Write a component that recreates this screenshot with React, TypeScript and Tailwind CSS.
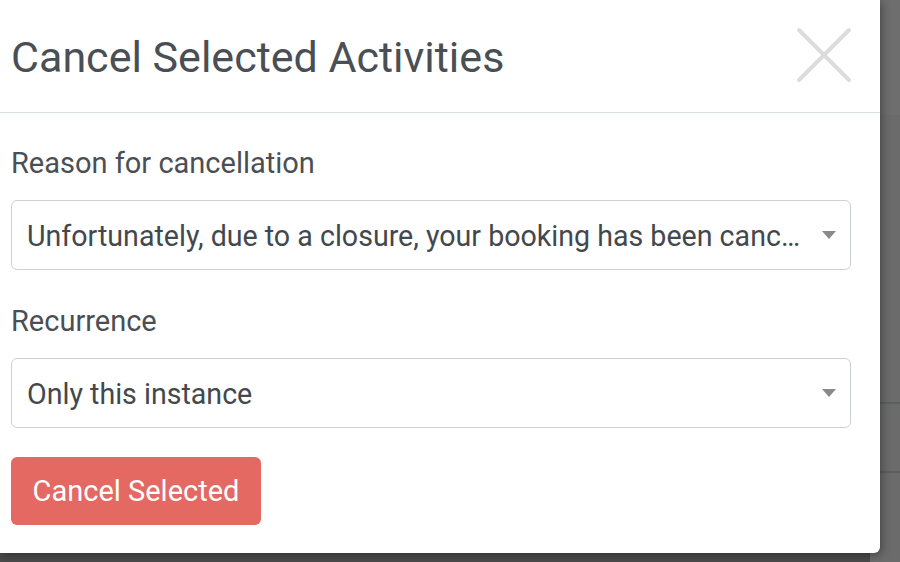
import React from "react";

function Caret() {
  return (
    <svg width="14" height="9" viewBox="0 0 14 9" className="shrink-0">
      <path d="M0 0 H14 L7 8 Z" fill="#8a8a8a" />
    </svg>
  );
}

function SelectBox({ value }: { value: string }) {
  return (
    <div className="flex h-[70px] items-center rounded-[6px] border border-[#c9d2da] bg-white pl-[15px] pr-[14px]">
      <span className="min-w-0 flex-1 truncate pt-[3px] text-[28.6px] leading-[1.3] text-[#43484d]">{value}</span>
      <span className="ml-[12px]">
        <Caret />
      </span>
    </div>
  );
}

export default function App() {
  return (
    <div
      className="relative h-[562px] w-[900px] overflow-hidden bg-[#4a4a4a]"
      style={{ fontFamily: "Roboto, 'Noto Sans', sans-serif" }}
    >
      <div className="absolute inset-y-0 right-0 w-[30px] bg-[#6b6b6b]">
        <div className="h-[115px] bg-[#6e6e6e]" />
        <div className="mt-[287px] h-[2px] bg-[#5c5f5f]" />
        <div className="mt-[67px] h-[2px] bg-[#5c5f5f]" />
      </div>
      <div className="relative flex h-[553px] w-[880px] flex-col rounded-br-[6px] bg-white shadow-[2px_2px_8px_rgba(0,0,0,0.35)]">
        <div className="flex h-[113px] items-center justify-between border-b border-[#d5dde6] pl-[11px] pr-[28px]">
          <h1 className="mt-[3px] text-[43px] font-normal leading-none text-[#4a4f55]">
            Cancel Selected Activities
          </h1>
          <svg width="56" height="56" viewBox="0 0 56 56" className="mb-[3px]">
            <path
              d="M3 3 L53 53 M53 3 L3 53"
              stroke="#dcdcdc"
              strokeWidth="4"
              strokeLinecap="round"
            />
          </svg>
        </div>
        <div className="flex flex-col px-[11px] pt-[36px]">
          <label className="text-[29px] leading-none text-[#4a4f55]">Reason for cancellation</label>
          <div className="mt-[22px] w-[840px]">
            <SelectBox value="Unfortunately, due to a closure, your booking has been cancelled. We apologise for any inconvenience." />
          </div>
          <label className="mt-[37px] text-[29px] leading-none text-[#4a4f55]">Recurrence</label>
          <div className="mt-[22px] w-[840px]">
            <SelectBox value="Only this instance" />
          </div>
          <div className="mt-[29px]">
            <button className="flex h-[68px] w-[250px] items-center justify-center rounded-[6px] bg-[#e36962] text-[29px] leading-none text-white">
              Cancel Selected
            </button>
          </div>
        </div>
      </div>
    </div>
  );
}
